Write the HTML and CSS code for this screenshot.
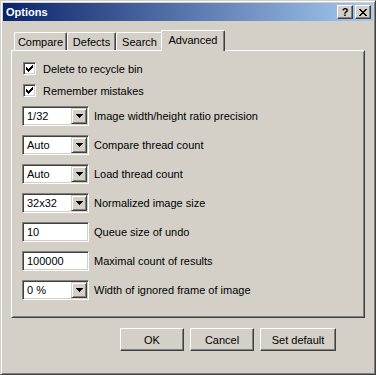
FILE: index.html
```html
<!DOCTYPE html>
<html lang="en">
<head>
    <meta charset="UTF-8">
    <title>Options</title>
    <link rel="stylesheet" href="styles.css">
</head>
<body>
    <div class="window">
        <div class="titlebar">
            <span class="title">Options</span>
            <div class="caption-buttons">
                <div class="caption-btn">?</div>
                <div class="caption-btn">
                    <svg width="8" height="7" viewBox="0 0 8 7"><path d="M0 0h2v1H0z M6 0h2v1H6z M1 1h2v1H1z M5 1h2v1H5z M2 2h4v1H2z M3 3h2v1H3z M2 4h4v1H2z M1 5h2v1H1z M5 5h2v1H5z M0 6h2v1H0z M6 6h2v1H6z" fill="#000"/></svg>
                </div>
            </div>
        </div>
        <div class="client">
            <div class="tabs">
                <div class="tab tab-compare">Compare</div>
                <div class="tab tab-defects">Defects</div>
                <div class="tab tab-search">Search</div>
                <div class="tab tab-advanced active">Advanced</div>
            </div>
            <div class="panel">
                <div class="check-row">
                    <span class="checkbox"><svg width="9" height="9" viewBox="0 0 9 9"><path d="M7 1h1v1H7z M6 2h2v1H6z M1 3h1v1H1z M5 3h3v1H5z M1 4h2v1H1z M4 4h3v1H4z M1 5h5v1H1z M2 6h3v1H2z M3 7h1v1H3z" fill="#000"/></svg></span>
                    <span>Delete to recycle bin</span>
                </div>
                <div class="check-row">
                    <span class="checkbox"><svg width="9" height="9" viewBox="0 0 9 9"><path d="M7 1h1v1H7z M6 2h2v1H6z M1 3h1v1H1z M5 3h3v1H5z M1 4h2v1H1z M4 4h3v1H4z M1 5h5v1H1z M2 6h3v1H2z M3 7h1v1H3z" fill="#000"/></svg></span>
                    <span>Remember mistakes</span>
                </div>
                <div class="field-row">
                    <div class="combo"><span>1/32</span><span class="combo-arrow"><svg width="7" height="4" viewBox="0 0 7 4"><path d="M0 0h7v1H0z M1 1h5v1H1z M2 2h3v1H2z M3 3h1v1H3z" fill="#000"/></svg></span></div>
                    <span class="field-label">Image width/height ratio precision</span>
                </div>
                <div class="field-row">
                    <div class="combo"><span>Auto</span><span class="combo-arrow"><svg width="7" height="4" viewBox="0 0 7 4"><path d="M0 0h7v1H0z M1 1h5v1H1z M2 2h3v1H2z M3 3h1v1H3z" fill="#000"/></svg></span></div>
                    <span class="field-label">Compare thread count</span>
                </div>
                <div class="field-row">
                    <div class="combo"><span>Auto</span><span class="combo-arrow"><svg width="7" height="4" viewBox="0 0 7 4"><path d="M0 0h7v1H0z M1 1h5v1H1z M2 2h3v1H2z M3 3h1v1H3z" fill="#000"/></svg></span></div>
                    <span class="field-label">Load thread count</span>
                </div>
                <div class="field-row">
                    <div class="combo"><span>32x32</span><span class="combo-arrow"><svg width="7" height="4" viewBox="0 0 7 4"><path d="M0 0h7v1H0z M1 1h5v1H1z M2 2h3v1H2z M3 3h1v1H3z" fill="#000"/></svg></span></div>
                    <span class="field-label">Normalized image size</span>
                </div>
                <div class="field-row">
                    <div class="edit">10</div>
                    <span class="field-label">Queue size of undo</span>
                </div>
                <div class="field-row">
                    <div class="edit">100000</div>
                    <span class="field-label">Maximal count of results</span>
                </div>
                <div class="field-row">
                    <div class="combo"><span>0 %</span><span class="combo-arrow"><svg width="7" height="4" viewBox="0 0 7 4"><path d="M0 0h7v1H0z M1 1h5v1H1z M2 2h3v1H2z M3 3h1v1H3z" fill="#000"/></svg></span></div>
                    <span class="field-label">Width of ignored frame of image</span>
                </div>
            </div>
            <div class="buttons">
                <div class="btn">OK</div>
                <div class="btn">Cancel</div>
                <div class="btn btn-wide">Set default</div>
            </div>
        </div>
    </div>
</body>
</html>
```

FILE: styles.css
```css
body {
    margin: 0;
    background-color: #d4d0c8;
    font-family: "Liberation Sans", Arial, sans-serif;
    font-size: 11px;
    color: #000;
}
.window {
    width: 376px;
    height: 375px;
    box-sizing: border-box;
    border: 1px solid;
    border-color: #d4d0c8 #404040 #404040 #d4d0c8;
    box-shadow: inset 1px 1px #fff, inset -1px -1px #808080;
    padding: 2px;
    display: flex;
    flex-direction: column;
    background-color: #d4d0c8;
}
.titlebar {
    height: 18px;
    flex: none;
    background: linear-gradient(to right, #0a246a, #a6caf0);
    display: flex;
    align-items: center;
    justify-content: space-between;
    padding: 0 2px 0 3px;
}
.title {
    color: #fff;
    font-weight: bold;
}
.caption-buttons {
    display: flex;
    gap: 2px;
}
.caption-btn {
    width: 16px;
    height: 14px;
    box-sizing: border-box;
    border: 1px solid;
    border-color: #fff #404040 #404040 #fff;
    box-shadow: inset -1px -1px #808080, inset 1px 1px #d4d0c8;
    background-color: #d4d0c8;
    display: flex;
    align-items: center;
    justify-content: center;
    font-weight: bold;
    font-size: 11px;
    line-height: 1;
}
.client {
    flex: 1;
    padding: 9px 8px 0;
    display: flex;
    flex-direction: column;
}
.tabs {
    display: flex;
    align-items: flex-end;
    height: 20px;
    padding-left: 3px;
}
.tab {
    height: 18px;
    box-sizing: border-box;
    border: 1px solid;
    border-bottom: 0;
    border-color: #fff #404040 #404040 #fff;
    border-radius: 2px 2px 0 0;
    box-shadow: inset -1px 0 #808080;
    text-align: center;
    line-height: 16px;
    padding-top: 1px;
    background-color: #d4d0c8;
}
.tab-compare { width: 53px; }
.tab-defects { width: 49px; }
.tab-search { width: 47px; }
.tab-advanced { width: 60px; }
.tab.active {
    width: 64px;
    height: 21px;
    margin: 0 -2px -1px;
    position: relative;
    z-index: 1;
}
.panel {
    height: 268px;
    box-sizing: border-box;
    border: 1px solid;
    border-color: #fff #404040 #404040 #fff;
    box-shadow: inset 1px 1px #d4d0c8, inset -1px -1px #808080;
    padding: 11px 10px;
    display: flex;
    flex-direction: column;
    gap: 9px;
}
.check-row {
    display: flex;
    align-items: center;
    gap: 7px;
    height: 13px;
    padding-left: 1px;
}
.checkbox {
    width: 13px;
    height: 13px;
    box-sizing: border-box;
    flex: none;
    border: 1px solid;
    border-color: #808080 #fff #fff #808080;
    box-shadow: inset 1px 1px #404040, inset -1px -1px #d4d0c8;
    background-color: #fff;
    padding: 1px;
    display: flex;
}
.field-row {
    display: flex;
    align-items: center;
    gap: 5px;
    height: 20px;
}
.combo, .edit {
    width: 67px;
    height: 20px;
    box-sizing: border-box;
    flex: none;
    border: 1px solid;
    border-color: #808080 #fff #fff #808080;
    box-shadow: inset 1px 1px #404040, inset -1px -1px #d4d0c8;
    background-color: #fff;
    padding: 1px 1px 1px 4px;
    display: flex;
    align-items: center;
}
.combo-arrow {
    margin-left: auto;
    width: 16px;
    height: 16px;
    box-sizing: border-box;
    border: 1px solid;
    border-color: #d4d0c8 #404040 #404040 #d4d0c8;
    box-shadow: inset 1px 1px #fff, inset -1px -1px #808080;
    background-color: #d4d0c8;
    display: flex;
    align-items: center;
    justify-content: center;
}
.buttons {
    display: flex;
    justify-content: flex-end;
    gap: 6px;
    padding: 10px 29px 0 0;
}
.btn {
    width: 64px;
    height: 23px;
    box-sizing: border-box;
    border: 1px solid;
    border-color: #fff #404040 #404040 #fff;
    box-shadow: inset -1px -1px #808080, inset 1px 1px #d4d0c8;
    display: flex;
    align-items: center;
    justify-content: center;
}
.btn-wide {
    width: 76px;
}
```
